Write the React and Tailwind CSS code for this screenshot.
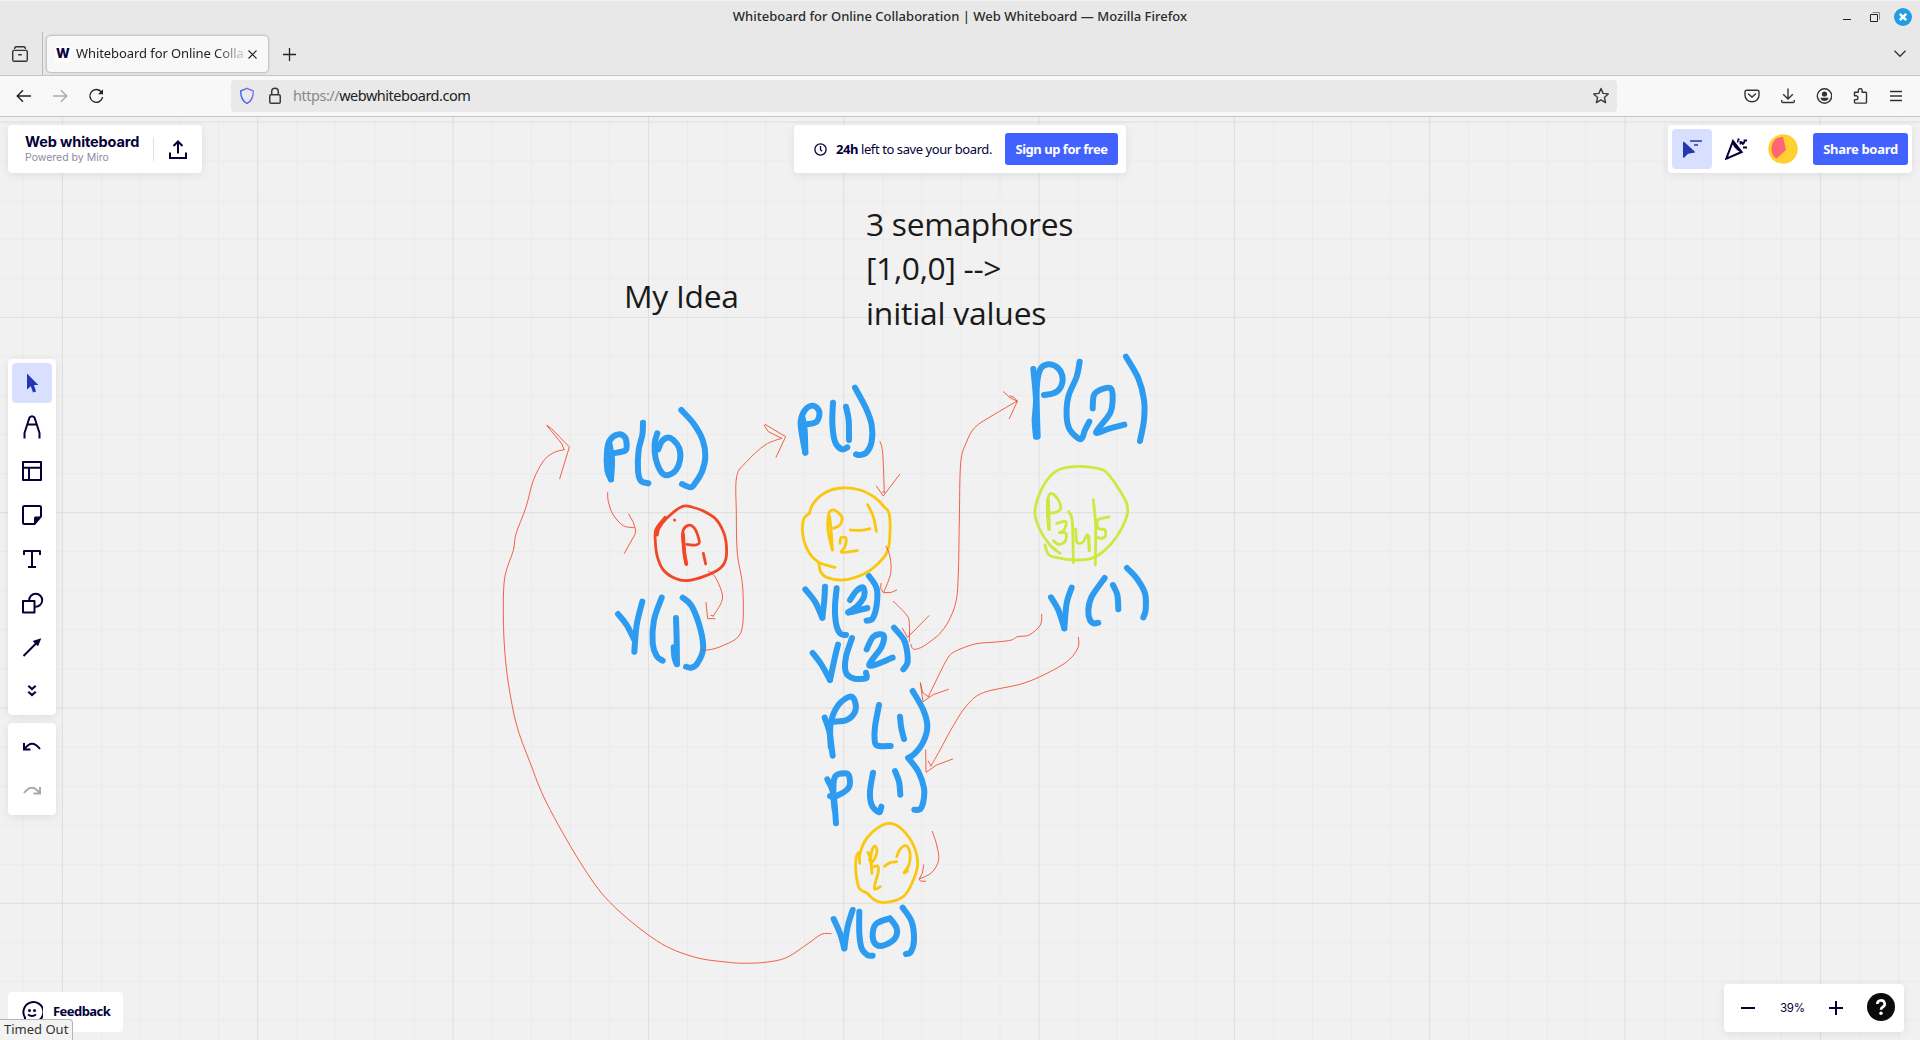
import React from "react";

const UI = 'font-["Noto_Sans",sans-serif]';

const BLUE = "#2d9bf0";
const RED = "#f24726";
const YELLOW = "#fac710";
const GREEN = "#cee741";

// Turns "x,y x,y ..." into a smooth curve that passes through every point.
function smooth(text) {
  const p = text.split(" ").map((s) => s.split(",").map(Number));
  let d = `M${p[0][0]} ${p[0][1]}`;
  for (let i = 0; i < p.length - 1; i++) {
    const a = p[i - 1] || p[i];
    const b = p[i];
    const c = p[i + 1];
    const e = p[i + 2] || c;
    d += `C${b[0] + (c[0] - a[0]) / 6} ${b[1] + (c[1] - a[1]) / 6} ${c[0] - (e[0] - b[0]) / 6} ${c[1] - (e[1] - b[1]) / 6} ${c[0]} ${c[1]}`;
  }
  return d;
}

function Ink({ color, width, strokes }) {
  return (
    <g stroke={color} strokeWidth={width} fill="none" strokeLinecap="round" strokeLinejoin="round">
      {strokes.map((s, i) => (
        <path key={i} d={smooth(s)} vectorEffect="non-scaling-stroke" />
      ))}
    </g>
  );
}

function Arrow({ shaft, heads }) {
  return (
    <g stroke={RED} strokeOpacity="0.85" strokeWidth="1" fill="none" strokeLinecap="round" strokeLinejoin="round">
      <path d={smooth(shaft)} vectorEffect="non-scaling-stroke" />
      {heads.map((h) => (
        <polyline key={h} points={h} vectorEffect="non-scaling-stroke" />
      ))}
    </g>
  );
}

const STEP = 39.067;

function Grid() {
  const xs = Array.from({ length: 50 }, (_, i) => i - 1);
  const ys = Array.from({ length: 24 }, (_, i) => i);
  return (
    <g>
      {[false, true].map((major) => (
        <g key={String(major)} stroke={major ? "#dedede" : "#ebebeb"} strokeWidth="1">
          {xs.filter((i) => (i % 5 === 0) === major).map((i) => (
            <line key={`x${i}`} x1={62.4 + i * STEP} x2={62.4 + i * STEP} y1="117" y2="1040" />
          ))}
          {ys.filter((i) => (i % 5 === 0) === major).map((i) => (
            <line key={`y${i}`} y1={122 + i * STEP} y2={122 + i * STEP} x1="0" x2="1920" />
          ))}
        </g>
      ))}
    </g>
  );
}

function Canvas() {
  return (
    <svg viewBox="0 117 1920 923" className="block h-[923px] w-[1920px] [grid-area:1/1]">
      <Grid />
      <g fill="#1a1a1a" fontFamily='"Open Sans", sans-serif' fontSize="31.8">
        <text x="624" y="307.500" textLength="115">My Idea</text>
        <text x="866" y="235.500" textLength="207.500">3 semaphores</text>
        <text x="866" y="279.800" textLength="135.500">{"[1,0,0] -->"}</text>
        <text x="866" y="324.500" textLength="180.500">initial values</text>
      </g>

      <g transform="translate(580 380) scale(.33333)">
        <Ink color={BLUE} width="6" strokes={[
          "93,298 82,270 81,215 90,180 115,163 135,172 140,195 135,212 100,220",
          "88,190 96,240 93,298",
          "189,128 187,165 176,210 174,270 182,302 205,310",
          "232,160 224,190 227,235 245,278 265,285 288,270 300,240 298,205 280,180 262,173 245,185 235,208",
          "304,90 340,130 368,180 376,230 366,275 345,310 332,322 306,312",
          "114,702 140,735 163,780",
          "187,665 170,735 163,815",
          "245,653 222,720 218,790 230,828 248,842",
          "288,714 290,780 291,853",
          "281,802 283,830 289,850",
          "308,653 335,678 362,750 369,810 352,850 335,863 318,860",
        ]} />
        <Ink color={RED} width="2.8" strokes={[
          "255,412 228,448 226,485 232,530 250,570 285,595 320,602 370,590 420,565 438,535 438,485 428,450 405,415 370,393 335,381 305,380 260,415 237,445 232,465",
          "283.5,420 284,420.5",
          "318,552 308,460 325,436 345,447 358,485 348,495 320,493",
          "370,520 377,552",
        ]} />
        <Ink color={RED} width="3.8" strokes={["309,462 313,520 319,552"]} />
        <Arrow shaft="83,338 85,365 100,405 130,437 163,443" heads={["146,402 160,427 167,450 165,463 133,520"]} />
        <Arrow shaft="385,573 405,590 425,635 425,665 400,708" heads={["400,708 393,706", "378,667 383,716 405,716"]} />
        <Arrow
          shaft="365,811 400,807 440,792 470,775 485,750 490,700 487,610 472,520 469,400 470,290 500,245 555,195 605,175"
          heads={["605,175 565,155 553,137 555,133 617,170 588,232"]}
        />
      </g>

      <g transform="translate(760 370) scale(.33333)">
        <Ink color={BLUE} width="6" strokes={[
          "136,248 127,200 122,155 135,120 160,107 178,125 170,155 140,163",
          "136,248 134,180 127,140",
          "219,98 217,160 225,215 245,238 262,232",
          "258,110 266,150 267,210",
          "285,53 318,115 335,165 335,215 320,247 300,255 288,253",
          "136,658 165,695 187,743",
          "195,650 193,690 187,743",
          "230,655 225,710 228,760 240,790 258,795",
          "270,690 290,662 310,653 312,680 290,710 265,728 322,714",
          "327,618 350,655 350,705 338,745 320,752",
          "158,849 185,885 210,930",
          "234,824 224,865 210,930",
          "276,804 258,860 257,905 280,925 318,925 318,908",
          "320,838 340,800 370,795 365,830 328,887 398,863",
          "402,773 432,810 442,850 442,880 430,898",
        ]} />
        <Ink color={YELLOW} width="2.8" strokes={[
          "148,430 160,400 195,368 245,354 300,360 345,383 372,410 387,430 390,490 382,545 350,585 310,613 250,630 200,622 182,605 176,577",
          "225,592 205,587 176,577 150,552 130,505 130,450 148,430",
          "217,540 204,480 207,430 222,420 245,440 240,465 220,475",
          "209,440 214,490 217,540",
          "240,520 243,503 258,505 255,530 245,547 292,542",
          "271,480 300,481 330,476",
          "323,404 340,440 349,484",
        ]} />
        <Arrow shaft="360,214 368,250 373,367" heads={["373,367 368,366", "349,348 370,378 419,313"]} />
        <Arrow shaft="378,529 390,560 392,610 372,665" heads={["363,640 362,655 370,668 395,667 410,660"]} />
        <Arrow shaft="400,694 440,735 448,760 448,815" heads={["427,775 443,802 507,737"]} />
      </g>

      <g transform="translate(940 340) scale(.33333)">
        <Ink color={BLUE} width="6" strokes={[
          "280,87 288,180 284,240 288,290",
          "293,290 290,150 300,90 325,73 355,85 368,115 360,145 340,160 312,165",
          "419,65 410,110 385,170 380,230 390,270 422,298 435,270 448,245",
          "458,205 462,165 485,148 512,145 518,175 510,220 468,277 510,265 553,254",
          "558,50 595,115 612,180 612,240 600,303",
          "333,772 355,810 373,865",
          "395,743 380,790 373,865",
          "494,714 455,770 445,810 450,840 462,850 475,848",
          "519,735 532,765 535,808",
          "561,684 590,715 615,760 617,810 610,832",
        ]} />
        <Ink color={GREEN} width="2.8" strokes={[
          "360,640 330,615 300,570 285,520 295,470 325,415 360,388 410,379 460,383 495,393 530,437 560,490 560,530 530,590 490,635 455,655 405,660 350,653 325,643 315,615",
          "327,567 322,520 324,475 335,460 355,480 362,505 345,518 325,518",
          "350,550 378,545 372,570 358,578 378,580 375,605 355,613 340,602",
          "386,515 397,545 400,668",
          "407,567 410,605 420,610 430,605 443,585 448,632",
          "447,590 448,632",
          "460,480 467,560 466,675",
          "470,540 475,565 495,570 495,590 480,595 468,590",
          "472,540 485,535 507,531",
        ]} />
        <Ink color={GREEN} width="3.8" strokes={["324,480 327,567"]} />
        <Arrow
          shaft="-87,913 -84,923 -75,928 -50,919 -10,890 0,880 25,845 48,785 55,700 58,540 62,370 78,310 105,262 160,225 232,183"
          heads={["190,155 210,173 232,184 222,172 210,168", "232,184 208,236"]}
        />
        <Arrow
          shaft="305,823 301,855 268,885 232,890 215,900 170,906 105,912 40,937 20,960 0,998 -35,1070"
          heads={["-35,1070 -52,1058 -59,1028 -51,1085 -20,1064 25,1048"]}
        />
        <Arrow
          shaft="415,892 415,920 390,957 340,990 250,1030 130,1058 80,1097 40,1157 0,1230 -27,1278"
          heads={["-27,1278 -35,1263", "-43,1230 -42,1297 -10,1275 38,1257"]}
        />
      </g>

      <g transform="translate(780 660) scale(.33333)">
        <Ink color={BLUE} width="6" strokes={[
          "134,173 148,215 158,287",
          "152,260 152,190 175,135 210,110 225,125 225,155 200,180 160,185",
          "297,135 285,200 284,240 292,257 332,258",
          "360,170 364,205 372,237",
          "398,93 430,150 442,200 430,245 405,280 385,294",
          "142,358 160,400 168,490",
          "150,408 165,410 205,385 208,350 195,340 165,350 160,400 164,450",
          "279,338 270,395 275,435 297,457 304,440",
          "345,333 357,365 361,404",
          "385,294 415,335 432,385 430,425 420,448 403,449",
          "161,777 180,820 193,865",
          "218,750 203,800 193,865",
          "238,755 238,820 245,865 262,885 278,887",
          "330,775 288,792 278,830 290,855 315,855 345,835 350,805 330,775",
          "368,743 395,785 402,840 393,875 378,882",
        ]} />
        <Ink color={YELLOW} width="2.8" strokes={[
          "239,610 240,580 260,535 295,502 330,490 365,507 400,555 413,610 400,660 370,710 310,728 280,717 262,700 238,685 228,640 228,595 235,578",
          "264,577 272,600 276,640",
          "276,625 272,595 278,565 287,560 290,580 278,605 268,600",
          "283,620 293,618 295,635 283,685 301,680",
          "313,619 330,608 350,605",
          "350,590 360,568 378,557 390,580 387,615 372,638 383,633",
        ]} />
        <Arrow shaft="457,514 470,555 476,600 455,638 420,656" heads={["431,615 427,640 417,658 422,663 437,664"]} />
      </g>

      <g transform="translate(480 400) scale(.33333 .38265)">
        <Arrow
          shaft="1053,1395 1025,1396 985,1420 920,1457 860,1469 800,1472 740,1469 640,1455 530,1413 390,1313 300,1207 200,1053 150,947 110,850 85,740 73,640 70,540 75,460 100,393 108,350 138,280 160,210 190,160 220,138 252,130"
          heads={["252,130 246,115 200,66 215,75 268,123 239,206"]}
        />
      </g>
    </svg>
  );
}

function Svg({ size = 24, width = 2, color = "#050038", children, box = 24 }) {
  return (
    <svg width={size} height={size} viewBox={`0 0 ${box} ${box}`} fill="none" stroke={color} strokeWidth={width} className="block shrink-0">
      {children}
    </svg>
  );
}

function TitleBar() {
  return (
    <div className="grid h-8 grid-cols-[1fr_auto_1fr] items-center border-t border-[#f2f2f2] text-[#2b2b2b]">
      <span />
      <span className={`${UI} text-[13px] font-medium tracking-[0.01px]`}>
        Whiteboard for Online Collaboration | Web Whiteboard — Mozilla Firefox
      </span>
      <div className="flex items-center justify-end gap-[19px] pr-2">
        <svg width="8" height="18"><path d="M0 11.5h8" stroke="#222" /></svg>
        <svg width="10" height="18" fill="none" stroke="#222"><path d="M.5 6.500h7v7h-7z" /><path d="M2.500 4.500h7v7" stroke="#888" /></svg>
        <svg width="18" height="18" className="-ml-[5px]"><circle cx="9" cy="9" r="9" fill="#229ee0" /><path d="m5.800 5.800 6.400 6.400m0-6.400-6.400 6.400" stroke="#fff" strokeWidth="2.400" /></svg>
      </div>
    </div>
  );
}

function TabStrip() {
  return (
    <div className="flex h-[43px] items-stretch">
      <div className="flex w-[43px] items-center border-r border-[#b9b9b9] pl-3">
        <Svg size={16} box={16} width={1.4} color="#333">
          <path d="M.7 5.700a1.300 1.300 0 0 1 1.300-1.300h12a1.300 1.300 0 0 1 1.300 1.300v8a1.600 1.600 0 0 1-1.600 1.600H2.300a1.600 1.600 0 0 1-1.600-1.600zM2.500 3Q2.600.7 4.500.7h7Q13.400.7 13.500 3M6.200 8.700h3.600" />
        </Svg>
      </div>
      <div className="mt-1 ml-1 flex h-9 w-[221px] items-center rounded bg-[#f8f8f8] pl-2 shadow-[0_0_3px_rgba(0,0,0,0.4)]">
        <div className="flex size-4 items-center justify-center rounded-sm bg-white font-[Inter,sans-serif] text-[13px] font-extrabold text-[#0b0040]">W</div>
        <div className={`${UI} ml-[5px] w-[169px] overflow-hidden text-[13px] tracking-[-0.08px] whitespace-nowrap text-[#222] [mask-image:linear-gradient(to_right,#000_82%,transparent_103%)]`}>
          Whiteboard for Online Collaboration
        </div>
        <svg width="9" height="9" className="ml-[3px]"><path d="m.5.5 8 8m0-8-8 8" stroke="#222" strokeWidth="1.100" /></svg>
      </div>
      <svg width="13" height="13" className="mt-4 ml-[15px]"><path d="M6.500 0v13M0 6.500h13" stroke="#222" strokeWidth="1.300" /></svg>
      <svg width="12" height="8" className="mt-[18px] mr-[14px] ml-auto" fill="none"><path d="m.5.800 5.500 5.500L11.500.800" stroke="#333" strokeWidth="1.300" /></svg>
    </div>
  );
}

function NavBar() {
  return (
    <div className="flex h-[42px] items-center border-y border-[#c4c4c4] bg-[#f8f8f8] pl-4">
      <div className="flex items-center gap-5">
        <Svg size={16} box={16} width={1.4} color="#222"><path d="M1.500 8H15M7 2.200 1.200 8 7 13.800" /></Svg>
        <Svg size={16} box={16} width={1.4} color="#aaa"><path d="M1 8h13.500M9 2.200 14.800 8 9 13.800" /></Svg>
        <Svg size={16} box={16} width={1.4} color="#222">
          <path d="M13.500 4.200A6.400 6.400 0 1 0 14.600 9" /><path d="M15 1.200v5H10z" fill="#222" stroke="none" />
        </Svg>
      </div>
      <div className="ml-[127px] flex h-8 w-[1386px] items-center rounded bg-[#e9e9e9] px-2">
        <svg width="16" height="18" fill="none">
          <defs><linearGradient id="shield" x1="0" y1="1" x2="1" y2="0"><stop offset="0.300" stopColor="#3b5fe0" /><stop offset="1" stopColor="#a070ff" /></linearGradient></defs>
          <path d="M8 1.300 14.300 4q.3 9-6.300 12.500Q1.400 13 1.700 4z" stroke="url(#shield)" strokeWidth="1.400" strokeLinejoin="round" />
        </svg>
        <svg width="12" height="18" fill="none" stroke="#3a3a3a" strokeWidth="1.500" className="ml-[14px]">
          <rect x=".75" y="7.700" width="10.500" height="8.500" rx="1.300" /><path d="M2.700 7.700V4.500a3.300 3.300 0 0 1 6.600 0v3.200" />
        </svg>
        <div className={`${UI} ml-3 text-[14.500px] tracking-[-0.48px] text-[#222]`}><span className="text-[#888]">https://</span>webwhiteboard.com</div>
        <svg width="18" height="18" viewBox="0 0 18 18" fill="none" className="-mr-px ml-auto">
          <path d="m9 1.500 2.100 4.900 5.200.5-3.900 3.500 1.200 5.200L9 12.900l-4.600 2.700 1.200-5.200L1.700 6.900l5.200-.5z" stroke="#3a3a3a" strokeWidth="1.400" strokeLinejoin="round" />
        </svg>
      </div>
      <div className="mr-4 ml-auto flex items-center gap-5">
        <Svg size={16} box={16} width={1.4} color="#333"><path d="M2.500 2.200h11a1.500 1.500 0 0 1 1.500 1.500v3.600a7 6.500 0 0 1-14 0V3.700a1.500 1.500 0 0 1 1.500-1.500z" /><path d="m4.500 6 3.500 3 3.500-3" strokeLinecap="round" /></Svg>
        <Svg size={16} box={16} width={1.4} color="#333"><path d="M8 .5v10.300M3.200 6.300 8 11l4.800-4.700M1.700 12v1.300q0 1.200 1.200 1.200h10.200q1.200 0 1.200-1.200V12" /></Svg>
        <Svg size={16} box={16} width={1.4} color="#333"><circle cx="8.500" cy="8" r="7.200" /><g fill="#333" stroke="none"><circle cx="8.500" cy="6" r="2.600" /><path d="M4.300 9.700h8.400q-1 3.200-4.200 3.200T4.300 9.700z" /></g></Svg>
        <Svg size={16} box={16} width={1.4} color="#333"><path d="M2.500 4.300h3.800V2.500a1.900 1.900 0 0 1 3.800 0v1.800h3.500q.9 0 .9.900v9q0 .9-.9.900H3.400q-.9 0-.9-.9v-2.600H4a1.900 1.900 0 0 0 0-3.800H2.500z" strokeLinejoin="round" /></Svg>
        <Svg size={16} box={16} width={1.4} color="#333"><path d="M2 3.500h12M2 8h12M2 12.500h12" /></Svg>
      </div>
    </div>
  );
}

const PANEL = "rounded bg-white shadow-[0_2px_8px_rgba(5,0,56,0.08)]";

function TopPanels() {
  return (
    <div className={`${UI} grid grid-cols-[1fr_auto_1fr] text-[13px] text-[#050038]`}>
      <div className={`${PANEL} flex h-12 w-[194px] items-center pl-[17px]`}>
        <div className="w-[128px] pb-px font-[Inter,sans-serif]">
          <div className="text-[14.500px] leading-[18px] font-bold tracking-[-0.12px] whitespace-nowrap">Web whiteboard</div>
          <div className="text-[10.500px] leading-[13px] text-[#8d8ba3]">Powered by Miro</div>
        </div>
        <div className="h-6 border-l border-[#e0e0e6]" />
        <svg width="18" height="19" fill="none" stroke="#050038" strokeWidth="2" className="ml-[15px]"><path d="M9 13.500V2M4.500 6 9 1.500 13.500 6M1 12.500V18h16v-5.500" /></svg>
      </div>
      <div className={`${PANEL} flex h-12 w-[332px] items-center pl-5`}>
        <svg width="13" height="13" fill="none" stroke="#050038" strokeWidth="1.300"><circle cx="6.500" cy="6.500" r="5.600" /><path d="M6.500 3v3.800l1.500 1.400" /></svg>
        <div className="ml-[9px] w-[169px] pt-px text-[13px] tracking-[-0.42px] whitespace-nowrap"><b>24h</b> left to save your board.</div>
        <div className="flex h-8 w-[113px] items-center justify-center rounded-[3px] bg-[#4262ff] pt-px text-[13px] font-bold tracking-[-0.48px] text-white">Sign up for free</div>
      </div>
      <div className={`${PANEL} flex h-12 w-[244px] items-center justify-self-end pl-1`}>
        <div className="flex size-10 items-center justify-center rounded bg-[#d9dfff]">
          <svg width="20" height="20"><path d="M1 3.500V18q.2 1.400 1.300.5L6 14.800l7-1.200q0-.8-.8-1.500L2.300 3Q1.300 2.400 1 3.500z" fill="#2237b0" /><path d="M8 2h12M12 6h4" stroke="#2237b0" strokeWidth="1.700" /></svg>
        </div>
        <svg width="22" height="22" fill="none" stroke="#050038" strokeWidth="2" className="ml-[13px]">
          <path d="M1.300 20.700 8 3l8.700 11zM8 3q0 6 8.700 11" /><path d="M12 3.500h1.500M15.500 6.500V4q1.500 0 2.500 2 1.500-1 1.500-3.500h2.500M18 9.500h4M12.500 1.500h2" strokeWidth="1.800" />
        </svg>
        <svg width="30" height="30" className="ml-[21px]"><circle cx="15" cy="15" r="14.700" fill="#ffd02f" /><path d="m9 4 6-1.200L18 16 8.500 24.500Q3.500 22 3.500 15T9 4z" fill="#ff6575" /></svg>
        <div className="ml-[15px] flex h-8 w-[95px] items-center justify-center rounded-[3px] bg-[#4262ff] pt-px text-[13px] font-bold tracking-[-0.3px] text-white">Share board</div>
      </div>
    </div>
  );
}

function ToolPanels() {
  return (
    <div className="mt-[186px] flex flex-col gap-2">
      <div className={`${PANEL} flex h-[356px] w-12 flex-col items-center gap-1 pt-1`}>
        <div className="flex size-10 items-center justify-center rounded bg-[#d9dfff]">
          <Svg><path d="M7 2.500 18.300 14H14l2 6.500-3 1-2.200-6.200L7 18.500z" fill="#2237b0" stroke="none" /></Svg>
        </div>
        <div className="flex size-10 items-center justify-center"><Svg><path d="M4.500 23.500V18L9.500 2.500q2.500-2.400 5 0L19.500 18v5.500M7.800 9.500h8.400" strokeLinejoin="round" /></Svg></div>
        <div className="flex size-10 items-center justify-center"><Svg><path d="M3 3h18v18H3zM3 8.800h18M9 9v12" strokeLinejoin="round" /></Svg></div>
        <div className="flex size-10 items-center justify-center"><Svg><path d="M14.500 21H4.500Q3 21 3 19.500v-15Q3 3 4.500 3h15Q21 3 21 4.500v9z" /><path d="M21.500 13.500h-6q-1.500 0-1.500 1.500v6.500h1z" fill="#050038" stroke="none" /></Svg></div>
        <div className="flex size-10 items-center justify-center"><Svg><path d="M4 8V4h16v4M12 4v16.500M8 20h8" strokeLinejoin="round" /></Svg></div>
        <div className="flex size-10 items-center justify-center"><Svg><path d="M3 10h11.500v11.500H3z" strokeLinejoin="round" /><path d="M9.200 9.500a6.500 6.500 0 1 1 6 6.200" /></Svg></div>
        <div className="flex size-10 items-center justify-center"><Svg><path d="M3.500 21 17 7.500" /><path d="m21.300 3.300-3.300 8L12.600 6z" fill="#050038" stroke="none" /></Svg></div>
        <div className="flex size-10 items-center justify-center"><Svg><path d="m8.300 6.800 3.700 3.300 3.700-3.300M8.300 12.800l3.700 3.300 3.700-3.300" /></Svg></div>
      </div>
      <div className={`${PANEL} flex h-[92px] w-12 flex-col items-center gap-1 pt-1`}>
        <div className="flex size-10 items-center justify-center"><Svg><path d="M4 8v6.500h6.500M4.500 14Q12 3.500 20 14" /></Svg></div>
        <div className="flex size-10 items-center justify-center"><Svg color="#a9a9ad"><path d="M20 8v6.500h-6.500M19.500 14Q12 3.500 4 14" /></Svg></div>
      </div>
    </div>
  );
}

function BottomPanels() {
  return (
    <div className={`${UI} mt-auto flex items-end justify-between pr-2`}>
      <div className="flex h-10 w-[115px] items-center rounded bg-white pl-[13px] text-[14px] font-bold text-[#050038]">
        <svg width="22" height="24" fill="none" stroke="#050038" strokeWidth="2"><path d="M4 22v-4.500a10 10 0 1 1 7 4.500H3" /><path d="M7 14.500q4 3 8 0" /><g fill="#050038" stroke="none"><circle cx="8.500" cy="10.500" r="1.500" /><circle cx="13.500" cy="10.500" r="1.500" /></g></svg>
        <span className="ml-[10px] text-[13px] tracking-[-0.55px]">Feedback</span>
      </div>
      <div className={`${PANEL} flex h-12 w-[180px] items-center pl-[17px]`}>
        <svg width="14" height="14" stroke="#050038" strokeWidth="2"><path d="M0 7h14" /></svg>
        <span className="ml-[25px] w-[24px] pt-px font-[Inter,sans-serif] text-[11.500px] tracking-[-0.3px] text-[#050038]">39%</span>
        <svg width="14" height="14" stroke="#050038" strokeWidth="2" className="ml-[25px]"><path d="M0 7h14M7 0v14" /></svg>
        <svg width="28" height="28" fill="none" className="ml-6 -translate-y-px"><circle cx="14" cy="14" r="14" fill="#0b0b0b" /><path d="M10.300 11a3.700 3.500 0 1 1 5.500 3q-1.800 1-1.800 2.800" stroke="#fff" strokeWidth="2.600" /><circle cx="14" cy="20.200" r="1.700" fill="#fff" /></svg>
      </div>
    </div>
  );
}

export default function App() {
  return (
    <div className="flex h-[1040px] w-[1920px] flex-col overflow-hidden bg-[#e8e8e8]">
      <TitleBar />
      <TabStrip />
      <NavBar />
      <div className="relative grid h-[923px] bg-[#f1f1f1]">
        <Canvas />
        <div className="z-10 flex h-[923px] flex-col p-2 [grid-area:1/1]">
          <TopPanels />
          <ToolPanels />
          <BottomPanels />
        </div>
        <div className={`${UI} absolute bottom-0 left-0 z-20 h-[21px] w-[73px] rounded-tr border-t border-r border-[#b5b5b5] bg-[#f3f3f3] pl-1 text-[13px] leading-[18px] whitespace-nowrap text-[#333]`}>
          Timed Out
        </div>
      </div>
    </div>
  );
}
